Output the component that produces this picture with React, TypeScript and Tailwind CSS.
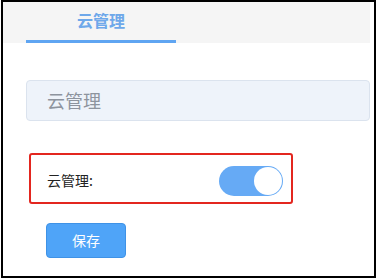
import React from "react";

export default function App() {
  return (
    <div className="w-[377px] h-[280px] bg-white pl-[1px]" style={{ fontFamily: '"Noto Sans CJK SC", "Liberation Sans", sans-serif' }}>
      <div className="w-[375px] h-[278px] border-2 border-black border-l-[2px] flex flex-col pr-[4px] box-border">
        {/* Tab bar */}
        <div className="h-[41px] bg-[#f5f5f5] flex items-end pl-[23px]">
          <div className="w-[150px] h-full flex flex-col">
            <div className="flex-1 flex items-center justify-center text-[16px] font-bold text-[#6ea8ea] pb-[2px]">云管理</div>
            <div className="h-[3px] bg-[#5fa5f2]" />
          </div>
        </div>
        {/* Section header */}
        <div className="mt-[37px] ml-[23px] h-[41px] bg-[#eef3fa] border border-[#dbe3ee] rounded-[4px] flex items-center pl-[20px] text-[18px] text-[#8d949e]">
          云管理
        </div>
        {/* Highlighted row */}
        <div className="mt-[32px] ml-[26px] w-[264px] h-[51px] border-2 border-[#e3261f] rounded-[3px] flex items-center justify-between pl-[16px] pr-[8px]">
          <span className="text-[14px] text-[#222] pt-[4px]">云管理:</span>
          <div className="w-[64px] h-[30px] rounded-full bg-[#66aaf5] flex items-center justify-end pr-[1px] mt-[4px]">
            <div className="w-[28px] h-[28px] rounded-full bg-white" />
          </div>
        </div>
        {/* Save button */}
        <div className="mt-[19px] ml-[43px]">
          <button className="w-[80px] h-[35px] rounded-[4px] bg-[#4fa4f8] border border-[#3f92e6] text-white text-[14px]">保存</button>
        </div>
      </div>
    </div>
  );
}
